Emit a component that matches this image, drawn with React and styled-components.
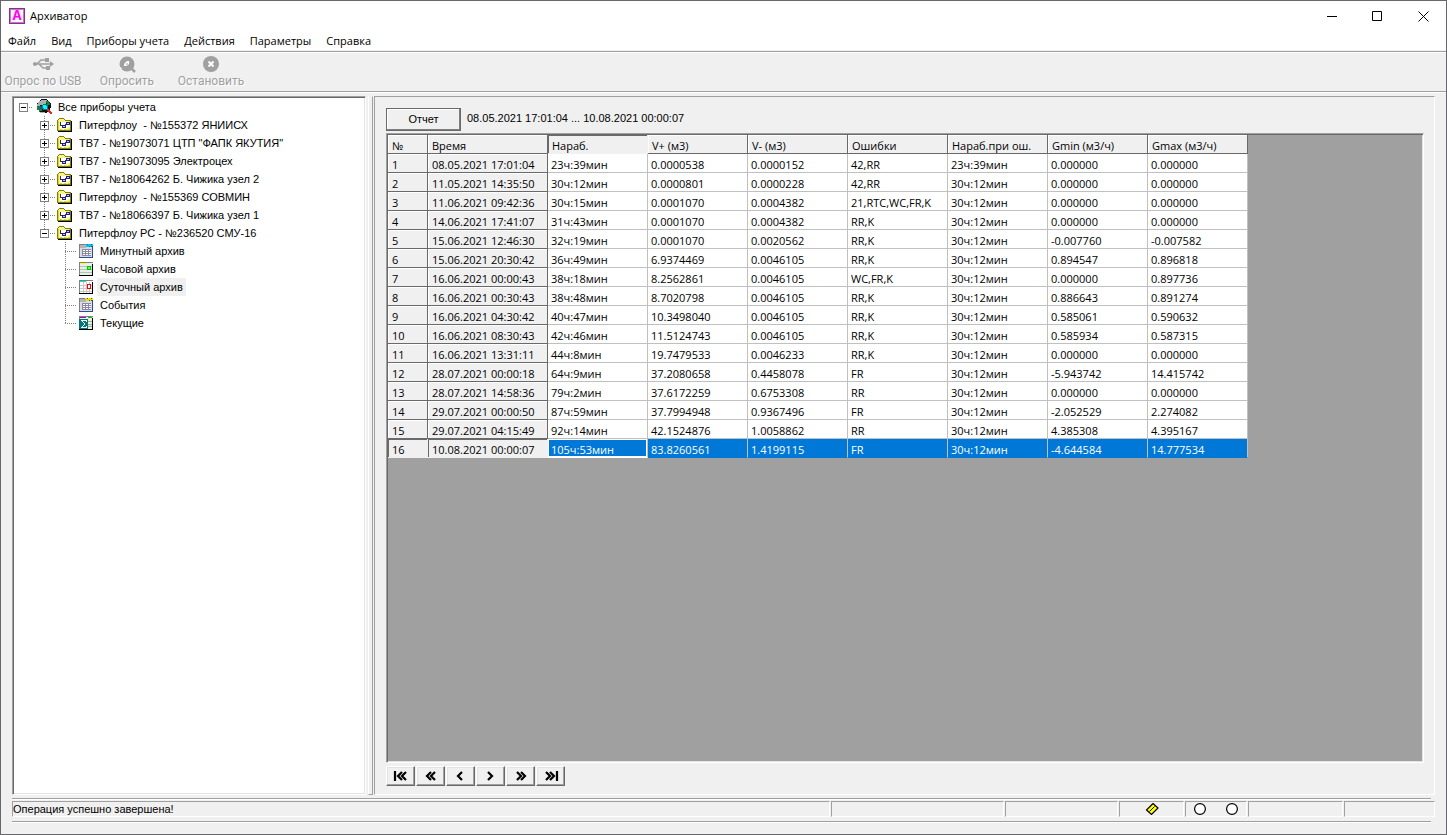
import { useState } from "react";
import styled, { createGlobalStyle, css } from "styled-components";

const uiFont = `"Open Sans", "Noto Sans", sans-serif`;
const classicFont = `"Liberation Sans", Arial, sans-serif`;

const GlobalStyle = createGlobalStyle`
  * {
    box-sizing: border-box;
  }
  body {
    margin: 0;
    color: #000;
    background: #f0f0f0;
    font: 11px/18px ${uiFont};
  }
  button {
    margin: 0;
    padding: 0;
    border: 0;
    color: inherit;
    background: none;
    font: inherit;
  }
`;

const Window = styled.div`
  display: flex;
  flex-direction: column;
  min-height: 100vh;
  border: 1px solid #66666b;
  background: #f0f0f0;
`;

const TitleBar = styled.header`
  display: flex;
  align-items: center;
  height: 30px;
  padding-left: 8px;
  background: #fff;
`;

const Logo = styled.span`
  width: 16px;
  height: 16px;
  margin-right: 5px;
  border: 2px solid #c07cc0;
  outline: 1px solid #8c2c8c;
  outline-offset: -1px;
  color: #ff00ff;
  background: #fff4ff;
  font: bold 15px/13px "Liberation Mono", monospace;
  text-align: center;
`;

const Title = styled.h1`
  flex: 1;
  margin: 0;
  font-size: 11px;
  font-weight: 400;
`;

const WindowButton = styled.button`
  display: flex;
  align-items: center;
  justify-content: center;
  width: 46px;
  height: 30px;
`;

const MenuBar = styled.nav`
  display: flex;
  gap: 1px;
  height: 19px;
  margin-bottom: 1px;
  background: #fff;
`;

const MenuItem = styled.button`
  padding: 0 7px;
  line-height: 19px;
`;

const Rule = styled.div`
  height: 2px;
  border-top: 1px solid #a0a0a0;
  border-bottom: 1px solid #fff;
  margin-right: ${(props) => (props.$short ? "4px" : "0")};
`;

const ToolBar = styled.div`
  display: flex;
  height: 38px;
`;

const ToolButton = styled.button`
  display: flex;
  flex-direction: column;
  align-items: center;
  width: 84px;
  padding-top: 2px;
  color: #a0a0a0;
  font: 12px/16px Roboto, ${uiFont};
  text-shadow: 1px 1px 0 #fff;
  white-space: nowrap;
`;

const Main = styled.main`
  flex: 1;
  display: flex;
  padding: 3px 11px;
`;

const Tree = styled.ul`
  width: 354px;
  margin: 0;
  padding: 1px 0;
  list-style: none;
  border: 1px solid;
  border-color: #a0a0a0 #fff #fff #a0a0a0;
  background: #fff;
  box-shadow: inset 1px 1px 0 #696969, inset -1px -1px 0 #e3e3e3;
  font: 11px/18px ${classicFont};
`;

const TreeRow = styled.li`
  display: flex;
  align-items: center;
  height: 18px;
  white-space: pre;
`;

const dotsY = "repeating-linear-gradient(180deg, #808080 0 1px, transparent 1px 2px)";
const dotsX = "repeating-linear-gradient(90deg, #808080 0 1px, transparent 1px 2px)";

const Branch = styled.span`
  display: flex;
  align-items: center;
  justify-content: center;
  width: 21px;
  height: 18px;
  background-repeat: no-repeat;
  ${(props) =>
    props.$line === "root" &&
    css`
      background-image: ${dotsX};
      background-size: 10px 1px;
      background-position: 10px 9px;
    `}
  ${(props) =>
    (props.$line === "tee" || props.$line === "end") &&
    css`
      background-image: ${dotsY}, ${dotsX};
      background-size: 1px ${props.$line === "end" ? "10px" : "18px"}, 11px 1px;
      background-position: 10px 0, 10px 9px;
    `}
`;

const Expander = styled.button`
  display: flex;
  width: 9px;
  height: 9px;
  border: 1px solid #808080;
  background: #fff;
`;

const IconSlot = styled.span`
  display: flex;
  align-items: center;
  width: 21px;
  height: 18px;
  padding-left: 2px;
`;

const TreeLabel = styled.button`
  height: 18px;
  padding: 0 3px;
  background: ${(props) => (props.$selected ? "#f0f0f0" : "none")};
  white-space: pre;
`;

const Splitter = styled.div`
  width: 5px;
  margin: 0 1px 0 2px;
  border: 1px solid;
  border-color: #f0f0f0 #a0a0a0 #a0a0a0 #fff;
`;

const Panel = styled.section`
  flex: 1;
  display: flex;
  flex-direction: column;
  min-width: 0;
  padding: 11px 10px 8px 11px;
  border: 1px solid;
  border-color: #a0a0a0 #fff #fff #a0a0a0;
`;

const raised = css`
  border: 1px solid;
  border-color: #fff #696969 #696969 #fff;
  background: #f0f0f0;
  box-shadow: inset -1px -1px 0 #a0a0a0, inset 1px 1px 0 #e3e3e3;
`;

const ReportBar = styled.div`
  display: flex;
  gap: 6px;
  margin-bottom: 2px;
  font: 11px/21px ${classicFont};
`;

const ReportButton = styled.button`
  ${raised}
  width: 75px;
  height: 23px;
  outline: 1px solid #696969;
  outline-offset: -1px;
  box-shadow: inset -1px -1px 0 #808080, inset 1px 1px 0 #fff;
`;

const GridBox = styled.div`
  flex: 1;
  overflow: auto;
  border: 1px solid;
  border-color: #a0a0a0 #fff #fff #a0a0a0;
  padding: 1px;
  background: #a0a0a0;
  box-shadow: inset 1px 1px 0 #696969, inset -1px -1px 0 #e3e3e3;
`;

const Grid = styled.table`
  width: 860px;
  table-layout: fixed;
  border-collapse: separate;
  border-spacing: 0;
`;

const cell = css`
  height: 19px;
  padding: 3px 3px 0;
  border-right: 1px solid #c0c0c0;
  border-bottom: 1px solid #c0c0c0;
  line-height: 15px;
  font-weight: 400;
  text-align: left;
  white-space: nowrap;
  overflow: hidden;
`;

const HeadCell = styled.th`
  ${cell}
  padding: 3px 4px 0;
  background: #f0f0f0;
  border-color: #696969;
  box-shadow: inset 1px 1px 0 #fff;
  ${(props) =>
    props.$pressed &&
    css`
      border-color: #f0f0f0;
      box-shadow: inset 1px 1px 0 #696969;
    `}
`;

const Cell = styled.td`
  ${cell}
  background: #fff;
  ${(props) =>
    props.$selected &&
    css`
      color: #fff;
      background: #0078d7;
      border-bottom-color: #0078d7;
    `}
  ${(props) =>
    props.$focused &&
    css`
      border-bottom-color: #fff;
      box-shadow: inset 0 0 0 1px #fff;
    `}
`;

const Pager = styled.div`
  display: flex;
  gap: 1px;
  margin-top: 3px;
`;

const PagerButton = styled.button`
  ${raised}
  display: flex;
  align-items: center;
  justify-content: center;
  width: 29px;
  height: 20px;
`;

const StatusBar = styled.footer`
  display: flex;
  gap: 1px;
  margin: 1px 0 4px;
`;

const Footer = styled.div`
  padding: 0 11px 11px;
`;

const StatusCell = styled.div`
  display: flex;
  align-items: center;
  justify-content: center;
  gap: 20px;
  height: 16px;
  width: ${(props) => props.$width};
  border: 1px solid;
  border-color: #a0a0a0 #fff #fff #a0a0a0;
`;

const StatusText = styled(StatusCell)`
  flex: 1;
  justify-content: flex-start;
  font: 11px/14px ${classicFont};
`;

const MENU = ["Файл", "Вид", "Приборы учета", "Действия", "Параметры", "Справка"];

const DEVICES = [
  "Питерфлоу  - №155372 ЯНИИСХ",
  `ТВ7 - №19073071 ЦТП "ФАПК ЯКУТИЯ"`,
  "ТВ7 - №19073095 Электроцех",
  "ТВ7 - №18064262 Б. Чижика узел 2",
  "Питерфлоу  - №155369 СОВМИН",
  "ТВ7 - №18066397 Б. Чижика узел 1",
  "Питерфлоу РС - №236520 СМУ-16",
];

const ARCHIVES = [
  { name: "Минутный архив", kind: "minute" },
  { name: "Часовой архив", kind: "hour" },
  { name: "Суточный архив", kind: "day" },
  { name: "События", kind: "events" },
  { name: "Текущие", kind: "current" },
];

const COLUMNS = [
  "№",
  "Время",
  "Нараб.",
  "V+ (м3)",
  "V- (м3)",
  "Ошибки",
  "Нараб.при ош.",
  "Gmin (м3/ч)",
  "Gmax (м3/ч)",
];

const ROWS = [
  ["08.05.2021 17:01:04", "23ч:39мин", "0.0000538", "0.0000152", "42,RR", "23ч:39мин", "0.000000", "0.000000"],
  ["11.05.2021 14:35:50", "30ч:12мин", "0.0000801", "0.0000228", "42,RR", "30ч:12мин", "0.000000", "0.000000"],
  ["11.06.2021 09:42:36", "30ч:15мин", "0.0001070", "0.0004382", "21,RTC,WC,FR,K", "30ч:12мин", "0.000000", "0.000000"],
  ["14.06.2021 17:41:07", "31ч:43мин", "0.0001070", "0.0004382", "RR,K", "30ч:12мин", "0.000000", "0.000000"],
  ["15.06.2021 12:46:30", "32ч:19мин", "0.0001070", "0.0020562", "RR,K", "30ч:12мин", "-0.007760", "-0.007582"],
  ["15.06.2021 20:30:42", "36ч:49мин", "6.9374469", "0.0046105", "RR,K", "30ч:12мин", "0.894547", "0.896818"],
  ["16.06.2021 00:00:43", "38ч:18мин", "8.2562861", "0.0046105", "WC,FR,K", "30ч:12мин", "0.000000", "0.897736"],
  ["16.06.2021 00:30:43", "38ч:48мин", "8.7020798", "0.0046105", "RR,K", "30ч:12мин", "0.886643", "0.891274"],
  ["16.06.2021 04:30:42", "40ч:47мин", "10.3498040", "0.0046105", "RR,K", "30ч:12мин", "0.585061", "0.590632"],
  ["16.06.2021 08:30:43", "42ч:46мин", "11.5124743", "0.0046105", "RR,K", "30ч:12мин", "0.585934", "0.587315"],
  ["16.06.2021 13:31:11", "44ч:8мин", "19.7479533", "0.0046233", "RR,K", "30ч:12мин", "0.000000", "0.000000"],
  ["28.07.2021 00:00:18", "64ч:9мин", "37.2080658", "0.4458078", "FR", "30ч:12мин", "-5.943742", "14.415742"],
  ["28.07.2021 14:58:36", "79ч:2мин", "37.6172259", "0.6753308", "RR", "30ч:12мин", "0.000000", "0.000000"],
  ["29.07.2021 00:00:50", "87ч:59мин", "37.7994948", "0.9367496", "FR", "30ч:12мин", "-2.052529", "2.274082"],
  ["29.07.2021 04:15:49", "92ч:14мин", "42.1524876", "1.0058862", "RR", "30ч:12мин", "4.385308", "4.395167"],
  ["10.08.2021 00:00:07", "105ч:53мин", "83.8260561", "1.4199115", "FR", "30ч:12мин", "-4.644584", "14.777534"],
];

const UsbIcon = () => (
  <svg width="24" height="18" viewBox="0 0 24 18" fill="none" stroke="#a0a0a0" strokeWidth="1.6">
    <path d="M2 9h18M6 9l4-4h5M8 9l4 4h4" />
    <path d="M19 6l4 3-4 3z" fill="#a0a0a0" stroke="none" />
    <circle cx="4" cy="9" r="2" fill="#a0a0a0" stroke="none" />
    <path d="M14 3h4v4h-4zM15 11h4v4h-4z" fill="#a0a0a0" stroke="none" />
  </svg>
);

const PollIcon = () => (
  <svg width="18" height="18" viewBox="0 0 18 18">
    <path d="M12 12l5 5" stroke="#a0a0a0" strokeWidth="2.5" />
    <circle cx="9" cy="9" r="7.5" fill="#a0a0a0" />
    <path d="M6 11c0-3 2-5 5-5 1 3-1 5-5 5z" fill="#fff" />
    <path d="M8 9h2" stroke="#a0a0a0" />
    <path d="M2 5l2-2M2 12l2 2" stroke="#f0f0f0" />
  </svg>
);

const StopIcon = () => (
  <svg width="18" height="18" viewBox="0 0 18 18">
    <circle cx="9" cy="9" r="8" fill="#a0a0a0" />
    <path d="M6.500 6.500l5 5M11.500 6.500l-5 5" stroke="#fff" strokeWidth="2" />
  </svg>
);

const GlobeIcon = () => (
  <svg width="16" height="16" viewBox="0 0 16 16" shapeRendering="crispEdges">
    <circle cx="8" cy="7" r="7" fill="#101018" />
    <path d="M3 2h2V1h6v1h2v1h-3v2H7v1H4v1H1V5h1V3h1z" fill="#a8b4b0" />
    <path d="M1 7h3v2h2v3H4v1H3v-2H1zM10 2h3v2h1v2h-3V4h-1z" fill="#1f7a3c" />
    <path d="M4 7h2v3H4z" fill="#204c9c" />
    <path d="M7 5h4v1h1v4h-1v1H7v-1H6V6h1z" fill="#008080" />
    <path d="M7 6h3v1h1v3H8V9H7z" fill="#00ffff" />
    <path d="M11 10h2v1h1v1h1v1h1v2h-2v-1h-1v-1h-1v-1h-1z" fill="#f02020" />
    <path d="M4 13h5v1H4z" fill="#b0b0b0" />
  </svg>
);

const FolderIcon = () => (
  <svg width="16" height="14" viewBox="0 0 16 14" shapeRendering="crispEdges">
    <path d="M0 2h1V1h1V0h5v1h1v1h6v11H0z" fill="#808000" />
    <path d="M1 2h1V1h5v1h1v1h5v9H1z" fill="#f8f48c" />
    <path d="M14 3h1v11H1v-1h13z" fill="#000" />
    <path d="M1 3h1v9H1zM3 11h2v1H3zM7 11h2v1H7zM11 11h2v1h-2zM12 3h1v2h-1z" fill="#e0d820" />
    <path d="M3 4h9v2h1v3h-2v1H9v1H3z" fill="#fff" />
    <path d="M3 4h1v4H3zM4 7h2v1H4zM8 6h2v1H8z" fill="#303050" />
    <path d="M5 7h4v3H5zM9 4h4v3H9z" fill="#202080" />
    <path d="M6 8h2v1H6zM10 5h2v1h-2z" fill="#c8c8e8" />
  </svg>
);

const SHEET = {
  minute: { top: "#00c8e8", paper: "#dcdcdc" },
  hour: { top: "#ffff00", paper: "#e8efe8" },
  day: { top: "#00e0e8", paper: "#fff" },
  events: { top: "#f0e000", paper: "#dcdcdc" },
  current: { top: "#c000c0", paper: "#e8efe8" },
};

const SheetIcon = ({ kind }) => {
  const { top, paper } = SHEET[kind];
  const stacked = kind === "minute" || kind === "events";
  return (
    <svg width="16" height="14" viewBox="-1 0 16 14" shapeRendering="crispEdges">
      <path d="M0 1h14v12H0z" fill={paper} />
      <path d="M0 0h14v1H0zM0 1h1v12H0z" fill="#808080" />
      <path d={stacked ? "M6 0h8v3H6z" : "M1 1h6v1H1z"} fill={top} />
      <path d="M13 2h1v12H0v-1h13z" fill={stacked ? "#3048a0" : "#000"} />
      {stacked && (
        <>
          <path d="M1 1h6v3H1z" fill="#b4b4b4" />
          <path d="M3 5h9v7H3z" fill="#8888a8" />
          <path d="M4 6h2v1H4zM7 6h2v1H7zM10 6h2v1h-2zM4 8h2v1H4zM7 8h2v1H7zM10 8h2v1h-2zM4 10h2v1H4zM7 10h2v1H7zM10 10h2v1h-2z" fill="#fff" />
          <path d="M8 0h1v1H8zM10 2h1v1h-1zM12 0h1v1h-1zM12 2h1v1h-1z" fill="#206080" />
        </>
      )}
      {kind === "day" && (
        <>
          <path d="M4 2h1v11H4zM7 2h1v11H7zM10 2h1v11h-1zM1 5h12v1H1zM1 8h12v1H1zM1 11h12v1H1z" fill="#c8c8c8" />
          <path d="M8 4h4v5H8z" fill="#ff0000" />
          <path d="M9 5h2v3H9z" fill="#fff" />
        </>
      )}
      {kind === "hour" && (
        <>
          <path d="M1 4h12v1H1zM1 7h12v1H1zM1 10h12v1H1z" fill="#b4c4b4" />
          <path d="M8 4h4v4H8z" fill="#00c800" />
          <path d="M9 5h2v2H9z" fill="#60ff60" />
        </>
      )}
      {kind === "current" && (
        <>
          <path d="M9 5h4v1H9zM9 8h4v1H9zM9 10h4v1H9z" fill="#90b090" />
          <path d="M9 1h4v1H9z" fill="#00c000" />
          <path d="M0 3h9v10H0z" fill="#007878" />
          <path d="M2 4h6v2H7V5H4v1h1v1h1v2H5v1H4v1h3v-1h1v2H2v-1h1v-1h1V9h1V7H4V6H3V5H2z" fill="#fff" />
        </>
      )}
    </svg>
  );
};

const left = (x) => `M${x + 5} 2l-4 4 4 4`;
const right = (x) => `M${x + 1} 2l4 4-4 4`;

const PAGES = [
  { label: "Первая", d: `M2 1v10${left(4)}${left(8)}` },
  { label: "Назад на страницу", d: `${left(3)}${left(7)}` },
  { label: "Назад", d: left(4) },
  { label: "Вперед", d: right(4) },
  { label: "Вперед на страницу", d: `${right(3)}${right(7)}` },
  { label: "Последняя", d: `${right(2)}${right(6)}M14 1v10` },
];

const BoxMark = ({ open }) => (
  <svg width="7" height="7" viewBox="0 0 7 7" shapeRendering="crispEdges">
    <path d={open ? "M1 3h5v1H1z" : "M1 3h5v1H1zM3 1h1v5H3z"} />
  </svg>
);

const DeviceTree = () => {
  const [selected, setSelected] = useState("Суточный архив");
  return (
    <Tree role="tree" aria-label="Приборы учета">
      <TreeRow role="treeitem">
        <Branch $line="root">
          <Expander aria-label="Свернуть"><BoxMark open /></Expander>
        </Branch>
        <IconSlot><GlobeIcon /></IconSlot>
        <TreeLabel>Все приборы учета</TreeLabel>
      </TreeRow>
      {DEVICES.map((name, i) => {
        const last = i === DEVICES.length - 1;
        return (
          <TreeRow key={name} role="treeitem">
            <Branch />
            <Branch $line={last ? "end" : "tee"}>
              <Expander aria-label={last ? "Свернуть" : "Развернуть"}><BoxMark open={last} /></Expander>
            </Branch>
            <IconSlot><FolderIcon /></IconSlot>
            <TreeLabel>{name}</TreeLabel>
          </TreeRow>
        );
      })}
      {ARCHIVES.map(({ name, kind }, i) => (
        <TreeRow key={name} role="treeitem">
          <Branch />
          <Branch />
          <Branch $line={i === ARCHIVES.length - 1 ? "end" : "tee"} />
          <IconSlot><SheetIcon kind={kind} /></IconSlot>
          <TreeLabel $selected={name === selected} onClick={() => setSelected(name)}>
            {name}
          </TreeLabel>
        </TreeRow>
      ))}
    </Tree>
  );
};

const ArchiveGrid = () => (
  <GridBox>
    <Grid>
      <colgroup>
        {COLUMNS.map((name, i) => (
          <col key={name} width={[40, 120][i] || 100} />
        ))}
      </colgroup>
      <thead>
        <tr>
          {COLUMNS.map((name, i) => (
            <HeadCell key={name} scope="col" $pressed={i === 2}>{name}</HeadCell>
          ))}
        </tr>
      </thead>
      <tbody>
        {ROWS.map(([time, ...values], i) => {
          const current = i === ROWS.length - 1;
          return (
            <tr key={time}>
              <HeadCell scope="row" $pressed={current}>{i + 1}</HeadCell>
              <HeadCell scope="row" $pressed={current}>{time}</HeadCell>
              {values.map((value, j) => (
                <Cell key={j} $selected={current} $focused={current && j === 0}>{value}</Cell>
              ))}
            </tr>
          );
        })}
      </tbody>
    </Grid>
  </GridBox>
);

const App = () => (
  <Window>
    <GlobalStyle />
    <TitleBar>
      <Logo>A</Logo>
      <Title>Архиватор</Title>
      <WindowButton aria-label="Свернуть">
        <svg width="11" height="11"><path d="M1 5.500h10" stroke="#000" /></svg>
      </WindowButton>
      <WindowButton aria-label="Развернуть">
        <svg width="11" height="11"><path d="M.5.5h9v9h-9z" fill="none" stroke="#000" /></svg>
      </WindowButton>
      <WindowButton aria-label="Закрыть">
        <svg width="11" height="11"><path d="M.5.5l10 10M10.500.5l-10 10" stroke="#000" /></svg>
      </WindowButton>
    </TitleBar>
    <MenuBar>
      {MENU.map((item) => (
        <MenuItem key={item}>{item}</MenuItem>
      ))}
    </MenuBar>
    <Rule />
    <ToolBar role="toolbar">
      <ToolButton disabled><UsbIcon />Опрос по USB</ToolButton>
      <ToolButton disabled><PollIcon />Опросить</ToolButton>
      <ToolButton disabled><StopIcon />Остановить</ToolButton>
    </ToolBar>
    <Rule />
    <Main>
      <DeviceTree />
      <Splitter />
      <Panel>
        <ReportBar>
          <ReportButton>Отчет</ReportButton>
          <span>08.05.2021 17:01:04 ... 10.08.2021 00:00:07</span>
        </ReportBar>
        <ArchiveGrid />
        <Pager>
          {PAGES.map(({ label, d }) => (
            <PagerButton key={label} aria-label={label}>
              <svg width="16" height="12" viewBox="0 0 16 12" fill="none" stroke="#000" strokeWidth="2.200">
                <path d={d} />
              </svg>
            </PagerButton>
          ))}
        </Pager>
      </Panel>
    </Main>
    <Footer>
      <Rule $short />
      <StatusBar>
        <StatusText>Операция успешно завершена!</StatusText>
        <StatusCell $width="173px" />
        <StatusCell $width="113px" />
        <StatusCell $width="65px">
          <svg width="14" height="12" viewBox="0 0 14 12">
            <path d="M8 .5l5 4.500-6.500 6.500-5-4.500z" fill="#ffff00" stroke="#000" strokeWidth="1.200" />
            <path d="M4.500 8.500l5-5" stroke="#000" />
          </svg>
        </StatusCell>
        <StatusCell $width="62px">
          <svg width="12" height="12"><circle cx="6" cy="6" r="5.400" fill="#fff" stroke="#000" strokeWidth="1.200" /></svg>
          <svg width="12" height="12"><circle cx="6" cy="6" r="5.400" fill="#fff" stroke="#000" strokeWidth="1.200" /></svg>
        </StatusCell>
        <StatusCell $width="95px" />
        <StatusCell $width="91px" />
      </StatusBar>
      <Rule $short />
    </Footer>
  </Window>
);

export default App;
